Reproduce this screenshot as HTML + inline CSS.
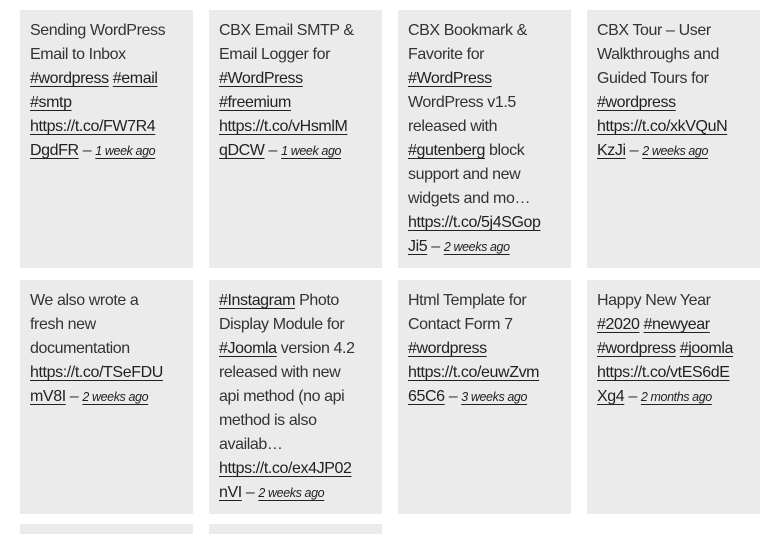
<!DOCTYPE html>
<html><head><meta charset="utf-8"><style>
body{margin:0;width:783px;height:526px;overflow:hidden;background:#fff;font-family:"Liberation Sans",sans-serif;}
.c{position:absolute;width:173px;background:#ebebeb;box-sizing:border-box;padding:9px 10px;font-size:16px;line-height:24px;color:#333;white-space:nowrap;letter-spacing:-0.4px}
a{color:#222;text-decoration:underline;text-underline-offset:3px}
.t{font-size:12.5px;font-style:italic;letter-spacing:-0.4px}
</style></head><body>
<div class="c" style="left:20px;top:10px;height:258px">Sending WordPress<br>Email to Inbox<br><a>#wordpress</a> <a>#email</a><br><a>#smtp</a><br><a>https://t.co/FW7R4</a><br><a>DgdFR</a> – <a class="t">1 week ago</a></div>
<div class="c" style="left:209px;top:10px;height:258px">CBX Email SMTP &amp;<br>Email Logger for<br><a>#WordPress</a><br><a>#freemium</a><br><a>https://t.co/vHsmlM</a><br><a>qDCW</a> – <a class="t">1 week ago</a></div>
<div class="c" style="left:398px;top:10px;height:258px">CBX Bookmark &amp;<br>Favorite for<br><a>#WordPress</a><br>WordPress v1.5<br>released with<br><a>#gutenberg</a> block<br>support and new<br>widgets and mo…<br><a>https://t.co/5j4SGop</a><br><a>Ji5</a> – <a class="t">2 weeks ago</a></div>
<div class="c" style="left:587px;top:10px;height:258px">CBX Tour – User<br>Walkthroughs and<br>Guided Tours for<br><a>#wordpress</a><br><a>https://t.co/xkVQuN</a><br><a>KzJi</a> – <a class="t">2 weeks ago</a></div>
<div class="c" style="left:20px;top:280px;height:234px">We also wrote a<br>fresh new<br>documentation<br><a>https://t.co/TSeFDU</a><br><a>mV8I</a> – <a class="t">2 weeks ago</a></div>
<div class="c" style="left:209px;top:280px;height:234px"><a>#Instagram</a> Photo<br>Display Module for<br><a>#Joomla</a> version 4.2<br>released with new<br>api method (no api<br>method is also<br>availab…<br><a>https://t.co/ex4JP02</a><br><a>nVI</a> – <a class="t">2 weeks ago</a></div>
<div class="c" style="left:398px;top:280px;height:234px">Html Template for<br>Contact Form 7<br><a>#wordpress</a><br><a>https://t.co/euwZvm</a><br><a>65C6</a> – <a class="t">3 weeks ago</a></div>
<div class="c" style="left:587px;top:280px;height:234px">Happy New Year<br><a>#2020</a> <a>#newyear</a><br><a>#wordpress</a> <a>#joomla</a><br><a>https://t.co/vtES6dE</a><br><a>Xg4</a> – <a class="t">2 months ago</a></div>
<div class="c" style="left:20px;top:524px;height:10px;padding:0"></div>
<div class="c" style="left:209px;top:524px;height:10px;padding:0"></div>
</body></html>
